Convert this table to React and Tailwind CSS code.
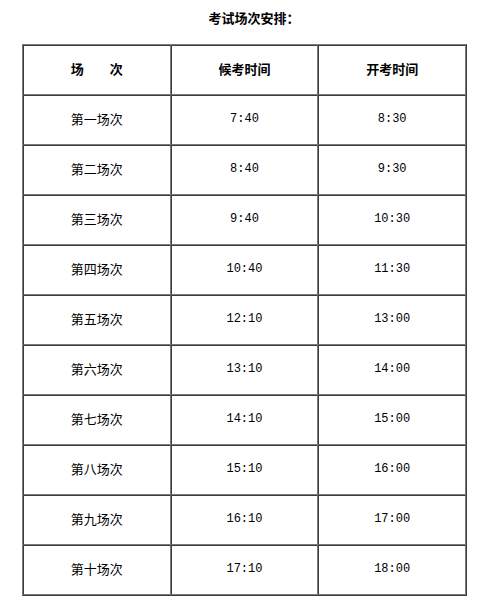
const rows = [
  ["第一场次", "7:40", "8:30"],
  ["第二场次", "8:40", "9:30"],
  ["第三场次", "9:40", "10:30"],
  ["第四场次", "10:40", "11:30"],
  ["第五场次", "12:10", "13:00"],
  ["第六场次", "13:10", "14:00"],
  ["第七场次", "14:10", "15:00"],
  ["第八场次", "15:10", "16:00"],
  ["第九场次", "16:10", "17:00"],
  ["第十场次", "17:10", "18:00"],
];

// inset cell border, like an old border=1 table
const cell =
  "h-[50px] p-0 pb-[2px] text-center align-middle border border-t-[#3c3c3c] border-l-[#3c3c3c] border-r-[#7b7b7b] border-b-[#7b7b7b]";

export default function App() {
  return (
    <div className="w-[478px] h-[614px] bg-white text-[13px] text-black font-['Noto_Sans_CJK_SC',sans-serif]">
      <p className="pt-[9px] pl-[30px] text-center font-bold leading-[18px]">
        考试场次安排：
      </p>
      <table className="mt-[17px] ml-[22px] w-[445px] table-fixed border-separate border-spacing-0 border border-t-[#7b7b7b] border-l-[#7b7b7b] border-r-[#3c3c3c] border-b-[#3c3c3c]">
        <thead>
          <tr>
            <th className={`${cell} font-bold`}>场　　次</th>
            <th className={`${cell} font-bold`}>候考时间</th>
            <th className={`${cell} font-bold`}>开考时间</th>
          </tr>
        </thead>
        <tbody>
          {rows.map((r) => (
            <tr key={r[0]}>
              <td className={cell}>{r[0]}</td>
              <td className={`${cell} font-['Liberation_Mono',monospace] text-[12px]`}>{r[1]}</td>
              <td className={`${cell} font-['Liberation_Mono',monospace] text-[12px]`}>{r[2]}</td>
            </tr>
          ))}
        </tbody>
      </table>
    </div>
  );
}
